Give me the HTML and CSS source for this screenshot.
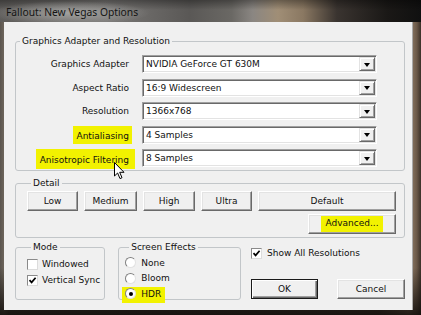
FILE: index.html
```html
<!DOCTYPE html>
<html>
<head>
<meta charset="utf-8">
<title>Fallout: New Vegas Options</title>
<link rel="stylesheet" href="styles.css">
</head>
<body>
<div class="window">
  <div class="titlebar"><span class="title">Fallout: New Vegas Options</span></div>
  <div class="client">
    <fieldset class="group adapter">
      <legend>Graphics Adapter and Resolution</legend>
      <div class="rows">
        <div class="lbl">Graphics Adapter</div>
        <div class="combo"><span class="val">NVIDIA GeForce GT 630M</span><span class="drop"><i class="arrow"></i></span></div>
        <div class="lbl">Aspect Ratio</div>
        <div class="combo"><span class="val">16:9 Widescreen</span><span class="drop"><i class="arrow"></i></span></div>
        <div class="lbl">Resolution</div>
        <div class="combo"><span class="val">1366x768</span><span class="drop"><i class="arrow"></i></span></div>
        <div class="lbl"><span class="hl hl-lbl">Antialiasing</span></div>
        <div class="combo"><span class="val">4 Samples</span><span class="drop"><i class="arrow"></i></span></div>
        <div class="lbl"><span class="hl hl-lbl hl-aniso">Anisotropic Filtering</span></div>
        <div class="combo"><span class="val">8 Samples</span><span class="drop"><i class="arrow"></i></span></div>
      </div>
    </fieldset>

    <fieldset class="group detail">
      <legend>Detail</legend>
      <div class="btnrow">
        <button class="btn w-low">Low</button>
        <button class="btn w-med">Medium</button>
        <button class="btn w-high">High</button>
        <button class="btn w-ultra">Ultra</button>
        <button class="btn w-default">Default</button>
      </div>
      <div class="advrow">
        <button class="btn w-adv"><span class="hl hl-adv">Advanced...</span></button>
      </div>
    </fieldset>

    <div class="bottom">
      <fieldset class="group mode">
        <legend>Mode</legend>
        <div class="opt"><span class="box"></span>Windowed</div>
        <div class="opt"><span class="box"><svg viewBox="0 0 9 9" width="9" height="9"><path d="M1.5 4.2 L3.6 6.4 L7.6 1.8" fill="none" stroke="#000" stroke-width="1.7"/></svg></span>Vertical Sync</div>
      </fieldset>
      <fieldset class="group effects">
        <legend>Screen Effects</legend>
        <div class="opt"><span class="radio"></span>None</div>
        <div class="opt"><span class="radio"></span>Bloom</div>
        <div class="opt"><span class="hl hl-hdr"><span class="radio on"></span>HDR</span></div>
      </fieldset>
      <div class="side">
        <div class="opt"><span class="box"><svg viewBox="0 0 9 9" width="9" height="9"><path d="M1.5 4.2 L3.6 6.4 L7.6 1.8" fill="none" stroke="#000" stroke-width="1.7"/></svg></span>Show All Resolutions</div>
        <div class="okrow">
          <button class="btn default-btn w-ok">OK</button>
          <button class="btn w-cancel">Cancel</button>
        </div>
      </div>
    </div>
  </div>
  <svg class="cursor" width="12" height="18" viewBox="0 0 12 18"><path d="M0.5 0.5 L0.5 14 L3.6 11 L6 16.6 L8 15.7 L5.7 10.3 L10 10.3 Z" fill="#fff" stroke="#000" stroke-width="1" stroke-linejoin="round"/></svg>
</div>
</body>
</html>
```

FILE: styles.css
```css
* { box-sizing: border-box; }
html, body { margin: 0; padding: 0; }
body {
  width: 421px;
  height: 315px;
  overflow: hidden;
  background: #1e1c1a;
  font-family: "DejaVu Sans", "Liberation Sans", sans-serif;
  font-size: 9px;
  color: #111;
}
.window {
  position: relative;
  width: 421px;
  height: 315px;
  display: flex;
  flex-direction: column;
  background:
    linear-gradient(to bottom, rgba(0,0,0,0) 85%, rgba(20,16,12,0.9) 100%),
    linear-gradient(to right, #5a544e 0%, #6e665c 1%, #4a4540 2%, #3c3834 40%, #4d4338 90%, #9a8670 97%, #6a5848 99%, #3a3028 100%);
}
.titlebar {
  height: 22px;
  flex: none;
  padding-left: 6px;
  display: flex;
  align-items: center;
  background:
    radial-gradient(ellipse 80px 12px at 70px 13px, rgba(170,170,168,0.85), rgba(150,150,148,0) 100%),
    linear-gradient(to bottom, rgba(0,0,0,0.35) 0%, rgba(0,0,0,0) 45%),
    linear-gradient(to right, #5e5c5a 0%, #7a7876 25%, #5a5856 45%, #6a6864 55%, #8a8682 60%, #a08e76 66%, #8a7862 72%, #3a3430 80%, #1a1816 92%, #101010 100%);
}
.title {
  font-family: "Noto Sans", "Open Sans", sans-serif;
  font-size: 10.3px;
  color: #141414;
  padding-top: 1px;
}
.client {
  flex: 1;
  margin: 0 8px 5px 4px;
  background: #f0f0f0;
  border-right: 1px solid #a8a8a8;
  padding: 13px 7px 0 11px;
}
.group {
  margin: 0;
  min-width: 0;
  border: 1px solid #c2c6c9;
  border-radius: 3px;
  padding: 0;
}
.group legend {
  padding: 0 2px;
  margin-left: 4px;
  line-height: 12px;
  height: 12px;
}
.adapter { padding: 8px 0 3px 0; }
.rows {
  display: grid;
  grid-template-columns: 115px 235px;
  grid-auto-rows: 18px;
  column-gap: 11px;
  row-gap: 5.5px;
}
.lbl {
  text-align: right;
  line-height: 18px;
  white-space: nowrap;
  padding-right: 2px;
}
.hl {
  background: #f2f200;
}
.hl-lbl {
  display: inline-block;
  padding: 2px 3px 0 3px;
  margin-right: -3px;
  line-height: 16px;
}
.hl-aniso {
  padding: 3px 6px 1px 4px;
  margin-right: -6px;
}
.combo {
  display: flex;
  align-items: stretch;
  background: #fff;
  border: 1px solid;
  border-color: #a0a0a0 #ffffff #ffffff #a0a0a0;
  box-shadow: inset 1px 1px 0 #696969, inset -1px -1px 0 #e3e3e3;
  padding: 1px;
}
.val {
  flex: 1;
  padding-left: 2px;
  line-height: 14px;
  white-space: nowrap;
}
.drop {
  width: 16px;
  flex: none;
  background: #f0f0f0;
  border: 1px solid;
  border-color: #e3e3e3 #696969 #696969 #e3e3e3;
  box-shadow: inset 1px 1px 0 #fff, inset -1px -1px 0 #a0a0a0;
  display: flex;
  align-items: center;
  justify-content: center;
}
.arrow {
  width: 0;
  height: 0;
  border-left: 3.5px solid transparent;
  border-right: 3.5px solid transparent;
  border-top: 4px solid #000;
  margin-top: 1px;
}
.detail {
  margin-top: 6px;
  padding: 2px 8px 3px 11px;
}
.btn {
  font: inherit;
  color: #111;
  background: #f0f0f0;
  height: 20px;
  padding: 0;
  border: 1px solid;
  border-color: #ffffff #696969 #696969 #ffffff;
  box-shadow: inset -1px -1px 0 #a0a0a0, inset 1px 1px 0 #e3e3e3;
  border-radius: 0;
}
.btnrow {
  display: flex;
  gap: 6px;
}
.w-low { width: 51px; }
.w-med { width: 53px; }
.w-high { width: 52px; }
.w-ultra { width: 51px; }
.w-default { width: 138px; }
.advrow {
  display: flex;
  justify-content: flex-end;
  margin-top: 3px;
}
.w-adv { width: 88px; }
.hl-adv {
  display: inline-block;
  padding: 1px 4px 2px 4px;
  line-height: 13px;
}
.bottom {
  display: flex;
  margin-top: 3px;
  align-items: flex-start;
}
.mode {
  width: 91px;
  height: 59px;
  padding: 3px 0 0 11px;
}
.effects {
  width: 124px;
  height: 59px;
  margin-left: 13px;
  padding: 2px 0 0 6px;
}
.opt {
  display: flex;
  align-items: center;
  height: 16px;
  white-space: nowrap;
}
.effects .opt { height: 15.5px; }
.box {
  width: 11px;
  height: 11px;
  flex: none;
  background: #fff;
  border: 1px solid;
  border-color: #8a8a8a #dcdcdc #dcdcdc #8a8a8a;
  margin-right: 4px;
  display: flex;
  align-items: center;
  justify-content: center;
}
.box svg { display: block; }
.radio {
  width: 11px;
  height: 11px;
  flex: none;
  border-radius: 50%;
  background: #fff;
  border: 1px solid;
  border-color: #808080 #e2e2e2 #e2e2e2 #808080;
  margin-right: 5px;
  display: flex;
  align-items: center;
  justify-content: center;
}
.radio.on::after {
  content: "";
  width: 4px;
  height: 4px;
  border-radius: 50%;
  background: #000;
}
.hl-hdr {
  display: inline-flex;
  align-items: center;
  padding: 1px 4px 4px 3px;
  margin: 0 0 -3px -3px;
}
.side {
  margin-left: 10px;
  padding-top: 4px;
  display: flex;
  flex-direction: column;
}
.side .box { margin-right: 5px; }
.okrow {
  display: flex;
  gap: 19px;
  margin-top: 18px;
}
.w-ok { width: 67px; }
.w-cancel { width: 68px; }
.default-btn {
  border-color: #1a1a1a;
  box-shadow: inset 1px 1px 0 #fff, inset -1px -1px 0 #696969, inset -2px -2px 0 #a0a0a0;
}
.cursor {
  position: absolute;
  left: 114px;
  top: 162px;
}
```
